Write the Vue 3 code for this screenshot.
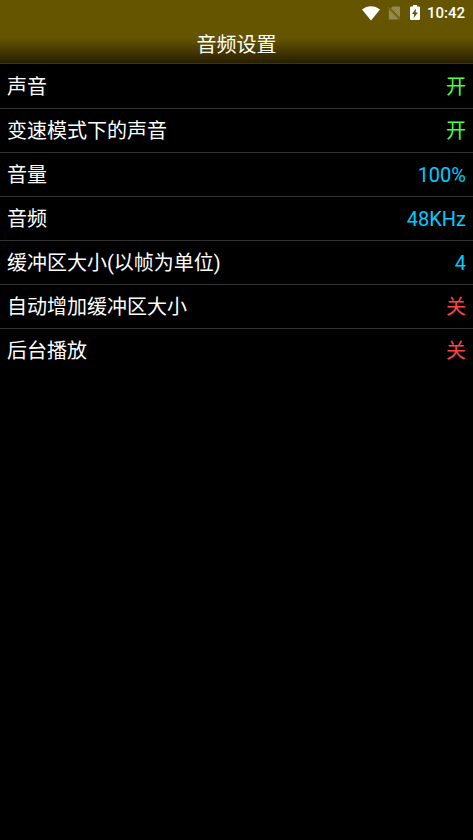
<template>
  <div class="screen">
    <header class="header">
      <div class="status-bar">
        <svg class="wifi" viewBox="0 0 18 15" aria-hidden="true">
          <path d="M0 3.6C5.2-.9 12.8-.9 18 3.6L9 14.6z" fill="#fff" />
        </svg>
        <svg class="sim" viewBox="0 0 14 16" aria-hidden="true">
          <path d="M5.5 1.500H12q1 0 1 1v10.200L3.800 3.200zM1.800 4.200L11.800 14.600H3q-1.200 0-1.200-1.200z" fill="#948951" />
          <path d="M1 2.200L13.200 14.800" stroke="#857838" stroke-width="1" />
        </svg>
        <svg class="battery" viewBox="0 0 10 16" aria-hidden="true">
          <path d="M3 0h4v1.6h2q1 0 1 1V14q0 1-1 1H1q-1 0-1-1V2.6q0-1 1-1h2z" fill="#fff" />
          <path d="M6 3.6L2 9h2.200L3.600 13L8 7.600H5.600z" fill="#650" />
        </svg>
        <time class="clock">10:42</time>
      </div>
      <h1 class="title">音频设置</h1>
    </header>
    <main>
      <ul class="settings">
        <li v-for="item in settings" :key="item.label" class="item">
          <button type="button" class="row" @click="toggle(item)">
            <span class="label">{{ item.label }}</span>
            <span class="value" :class="valueClass(item.value)">{{ formatValue(item.value) }}</span>
          </button>
        </li>
      </ul>
    </main>
  </div>
</template>

<script setup>
import { ref } from 'vue'

const settings = ref([
  { label: '声音', value: true },
  { label: '变速模式下的声音', value: true },
  { label: '音量', value: '100%' },
  { label: '音频', value: '48KHz' },
  { label: '缓冲区大小(以帧为单位)', value: '4' },
  { label: '自动增加缓冲区大小', value: false },
  { label: '后台播放', value: false }
])

const isSwitch = (value) => typeof value === 'boolean'

const formatValue = (value) => {
  if (!isSwitch(value)) return value
  return value ? '开' : '关'
}

const valueClass = (value) => {
  if (!isSwitch(value)) return 'is-option'
  return value ? 'is-on' : 'is-off'
}

const toggle = (item) => {
  if (isSwitch(item.value)) {
    item.value = !item.value
  }
}
</script>

<style>
body {
  margin: 0;
  background: #000;
}
</style>

<style scoped>
.screen {
  min-height: 100vh;
  background: #000;
  color: #fff;
  font-family: Roboto, "Noto Sans CJK SC", sans-serif;
}

.header {
  background: linear-gradient(#650 60%, #281f00);
  border-bottom: 1px solid #333;
}

.status-bar {
  display: flex;
  align-items: center;
  justify-content: flex-end;
  height: 26px;
  padding: 0 8px;
}

.wifi {
  width: 18px;
  height: 15px;
  margin-right: 7px;
}

.sim {
  width: 14px;
  height: 16px;
  margin-right: 9px;
}

.battery {
  width: 10px;
  height: 16px;
  margin-right: 7px;
}

.clock {
  font-size: 15px;
  font-weight: 500;
  line-height: 26px;
}

.title {
  margin: 0;
  padding-top: 1px;
  font-size: 20px;
  font-weight: 400;
  line-height: 36px;
  text-align: center;
}

.settings {
  margin: 0;
  padding: 0;
  list-style: none;
}

.item {
  border-top: 1px solid #333;
}

.item:first-child {
  border-top-color: transparent;
}

.row {
  display: flex;
  justify-content: space-between;
  width: 100%;
  padding: 2px 7px 0;
  border: 0;
  background: none;
  color: inherit;
  font: inherit;
  font-size: 20px;
  line-height: 41px;
  text-align: left;
  cursor: pointer;
}

.is-on {
  color: #4f4;
}

.is-off {
  color: #f44;
}

.is-option {
  color: #0cf;
}
</style>
